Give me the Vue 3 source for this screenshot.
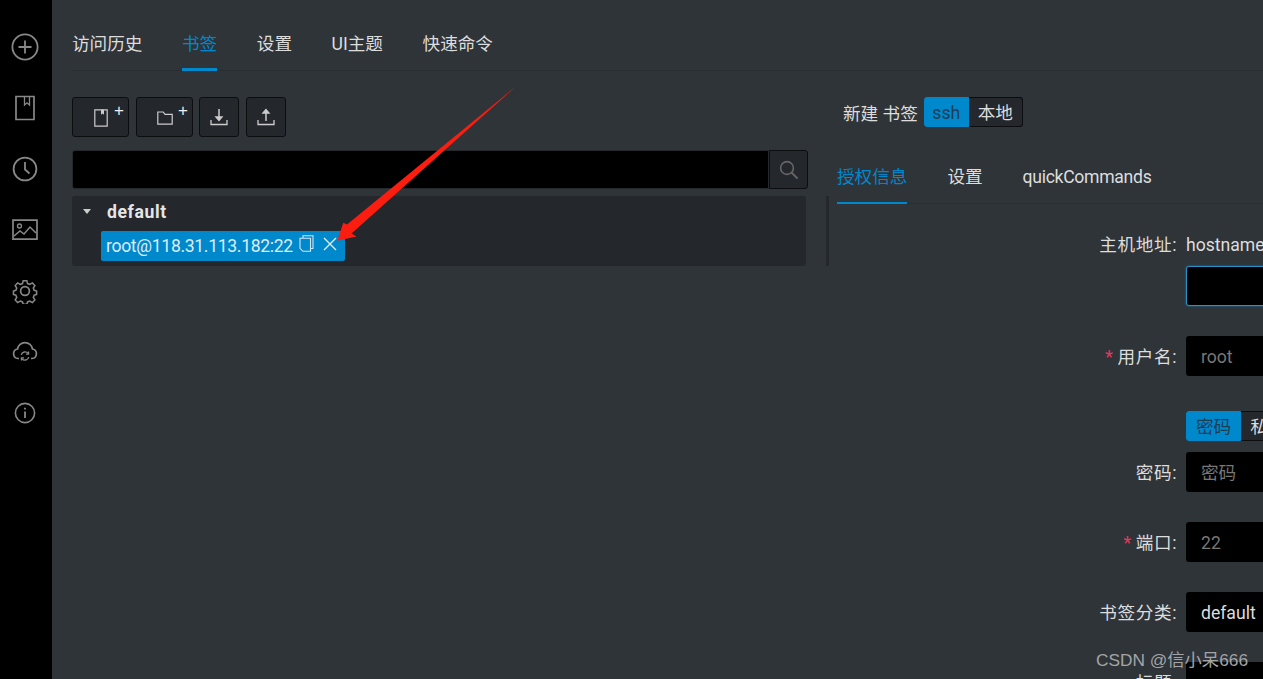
<script setup>
const mainTabs = [
  { label: '访问历史' },
  { label: '书签', active: true },
  { label: '设置' },
  { label: 'UI主题' },
  { label: '快速命令' }
]

const subTabs = [
  { label: '授权信息', active: true },
  { label: '设置' },
  { label: 'quickCommands' }
]
</script>

<template>
  <div class="page">
    <aside class="sidebar">
      <div class="side-item">
        <svg width="28" height="28" viewBox="0 0 28 28" fill="none" stroke="#888" stroke-width="1.8">
          <circle cx="14" cy="14" r="12.6" />
          <path d="M14 7.5v13M7.5 14h13" />
        </svg>
      </div>
      <div class="side-item">
        <svg width="22" height="26" viewBox="0 0 22 26" fill="none" stroke="#888" stroke-width="1.7">
          <path d="M2 1.5h18v23H2z" />
          <path d="M10.5 1.5v8.5l2.5-2.2 2.5 2.2V1.5" stroke-width="1.3" />
        </svg>
      </div>
      <div class="side-item">
        <svg width="26" height="26" viewBox="0 0 26 26" fill="none" stroke="#888" stroke-width="1.8">
          <circle cx="13" cy="13" r="11.4" />
          <path d="M13 6v7.5l4.5 4" />
        </svg>
      </div>
      <div class="side-item">
        <svg width="26" height="22" viewBox="0 0 26 22" fill="none" stroke="#888" stroke-width="1.7">
          <path d="M1 1.2h24v19H1z" />
          <circle cx="7.5" cy="7" r="2" stroke-width="1.3" />
          <path d="M2 17l6-5 4 3 6-7 6 6" stroke-width="1.5" />
        </svg>
      </div>
      <div class="side-item">
        <svg width="26" height="26" viewBox="0 0 26 26" fill="none" stroke="#888" stroke-width="1.7">
          <circle cx="13" cy="13" r="4.4" />
          <path d="M11 1.6h4l.8 3.2 2.4 1 2.9-1.7 2.7 2.9-1.7 2.8 1 2.4 2.6.8v3.8l-2.6.8-1 2.4 1.7 2.8-2.7 2.9-2.9-1.7-2.4 1-.8 2.5h-4l-.8-2.5-2.4-1-2.9 1.7-2.7-2.9 1.7-2.8-1-2.4-2.6-.8v-3.8l2.6-.8 1-2.4-1.7-2.8 2.7-2.9 2.9 1.7 2.4-1z" transform="translate(1.2 1.2) scale(.91)" />
        </svg>
      </div>
      <div class="side-item">
        <svg width="26" height="22" viewBox="0 0 26 22" fill="none" stroke="#888" stroke-width="1.7">
          <path d="M7 17.5H6A4.8 4.8 0 0 1 5.5 8 7.6 7.6 0 0 1 20.5 8 4.8 4.8 0 0 1 20 17.5h-1" />
          <path d="M9.3 14a3.8 3.8 0 0 1 6.8-1.6M16.7 16a3.8 3.8 0 0 1-6.8 1.6" stroke-width="1.4" />
          <path d="M16.6 10.6v2.6h-2.6M9.4 19.4v-2.6H12" stroke-width="1.2" />
        </svg>
      </div>
      <div class="side-item">
        <svg width="22" height="22" viewBox="0 0 22 22" fill="none" stroke="#888" stroke-width="1.6">
          <circle cx="11" cy="11" r="9.6" />
          <path d="M11 9.5v6.5" stroke-width="1.8" />
          <path d="M11 5.8v1.8" stroke-width="1.8" />
        </svg>
      </div>
    </aside>

    <main class="main">
      <nav class="tabs main-tabs">
        <span v-for="tab in mainTabs" :key="tab.label" class="tab" :class="{ active: tab.active }">{{ tab.label }}</span>
      </nav>

      <div class="columns">
        <section class="left">
          <div class="toolbar">
            <button class="tool wide">
              <svg width="14" height="18" viewBox="0 0 14 18" fill="none" stroke="#ccc" stroke-width="1.2">
                <path d="M.8.8h12.4v16.4H.8z" />
                <path d="M7 .8v5l1.5-1.2L10 5.8V.8" fill="#ccc" stroke="none" />
              </svg>
              <span class="plus">+</span>
            </button>
            <button class="tool wide">
              <svg width="16" height="14" viewBox="0 0 16 14" fill="none" stroke="#ccc" stroke-width="1.2">
                <path d="M.8 1h5.4l1.8 2.4h7.2v9.8H.8z" />
              </svg>
              <span class="plus">+</span>
            </button>
            <button class="tool">
              <svg width="18" height="18" viewBox="0 0 18 18" fill="none" stroke="#ccc" stroke-width="1.3">
                <path d="M1 12v4.5h16V12" />
                <path d="M9 1v10" stroke-width="1.5" />
                <path d="M6 9l3 3.5L12 9z" fill="#ccc" />
              </svg>
            </button>
            <button class="tool">
              <svg width="18" height="18" viewBox="0 0 18 18" fill="none" stroke="#ccc" stroke-width="1.3">
                <path d="M1 12v4.5h16V12" />
                <path d="M9 13V4" stroke-width="1.5" />
                <path d="M6 5l3-3.5L12 5z" fill="#ccc" />
              </svg>
            </button>
          </div>

          <div class="search">
            <div class="search-input"></div>
            <button class="search-btn">
              <svg width="20" height="20" viewBox="0 0 20 20" fill="none" stroke="#666" stroke-width="1.6">
                <circle cx="8" cy="8" r="6.4" />
                <path d="M12.6 12.6l6 6" stroke-width="2" />
              </svg>
            </button>
          </div>

          <div class="tree">
            <div class="tree-group">
              <span class="caret"></span>
              <span class="group-name">default</span>
            </div>
            <div class="tree-leaf">
              <span class="leaf-title">root@118.31.113.182:22</span>
              <svg class="leaf-copy" width="15" height="17" viewBox="0 0 15 17" fill="none" stroke="#cfe6f4" stroke-width="1.1">
                <path d="M4 3V.7h10V13.5h-2.5" />
                <path d="M1 3.3h10.5v13H4L1 13.3z" />
              </svg>
              <svg class="leaf-close" width="14" height="14" viewBox="0 0 14 14" fill="none" stroke="#dcecf6" stroke-width="1.4">
                <path d="M1 1l12 12M13 1L1 13" />
              </svg>
            </div>
          </div>
        </section>

        <div class="splitter"></div>

        <section class="right">
          <div class="new-head">
            <span class="new-title">新建 书签</span>
            <div class="segment">
              <span class="seg on ssh">ssh</span>
              <span class="seg">本地</span>
            </div>
          </div>

          <nav class="tabs sub-tabs">
            <span v-for="tab in subTabs" :key="tab.label" class="tab" :class="{ active: tab.active }">{{ tab.label }}</span>
          </nav>

          <div class="form">
            <div class="row host">
              <label class="label">主机地址:</label>
              <div class="field">
                <div class="hint">hostname</div>
                <div class="input focused"></div>
              </div>
            </div>
            <div class="row user">
              <label class="label"><i class="req">*</i>用户名:</label>
              <div class="field"><div class="input ph">root</div></div>
            </div>
            <div class="row auth">
              <div class="label"></div>
              <div class="field">
                <div class="segment">
                  <span class="seg on">密码</span>
                  <span class="seg">私钥</span>
                </div>
              </div>
            </div>
            <div class="row pass">
              <label class="label">密码:</label>
              <div class="field"><div class="input ph">密码</div></div>
            </div>
            <div class="row">
              <label class="label"><i class="req">*</i>端口:</label>
              <div class="field"><div class="input ph">22</div></div>
            </div>
            <div class="row">
              <label class="label">书签分类:</label>
              <div class="field"><div class="input val">default</div></div>
            </div>
            <div class="row">
              <label class="label">标题:</label>
              <div class="field"><div class="input"></div></div>
            </div>
          </div>
        </section>
      </div>
    </main>

    <svg class="arrow" width="1263" height="679" viewBox="0 0 1263 679">
      <polygon points="516.7,85.7 347,224.5 343.3,222.7 337.3,240.7 356.5,236.5 351.5,233.5" fill="#fb1d10" />
    </svg>
    <span class="watermark">CSDN @信小呆666</span>
  </div>
</template>

<style>
html, body {
  margin: 0;
  background: #2f3439;
}
</style>

<style scoped>
.page {
  position: relative;
  display: flex;
  width: 1263px;
  height: 679px;
  overflow: hidden;
  background: #2f3439;
  color: #ddd;
  font-family: Roboto, "Noto Sans CJK SC", sans-serif;
  font-size: 17.6px;
}

.sidebar {
  flex: 0 0 52px;
  box-sizing: border-box;
  background: #000;
  padding: 16px 2px 0 0;
}

.side-item {
  height: 61px;
  display: flex;
  justify-content: center;
  align-items: center;
}

.main {
  flex: 1;
  min-width: 0;
  padding-left: 20px;
}

.tabs {
  display: flex;
  border-bottom: 1px solid #2a2e32;
  white-space: nowrap;
}

.main-tabs {
  gap: 39.6px;
  height: 70px;
  margin-bottom: 26px;
}

.tab {
  height: calc(100% + 1px);
  box-sizing: border-box;
  line-height: 28px;
  padding-top: 30px;
}

.tab.active {
  color: #08c;
  border-bottom: 3px solid #08c;
}

.columns {
  display: flex;
}

.left {
  flex: 0 0 736px;
}

.toolbar {
  display: flex;
  gap: 7px;
  height: 40px;
  margin-bottom: 13px;
}

.tool {
  position: relative;
  width: 40px;
  height: 40px;
  padding: 0;
  box-sizing: border-box;
  display: flex;
  align-items: center;
  justify-content: center;
  background: #24272c;
  border: 1px solid #0c0d0e;
  border-radius: 3px;
}

.tool.wide {
  width: 57px;
}

.tool.wide + .tool:not(.wide) {
  margin-left: -1px;
}

.tool.wide svg {
  margin-top: 2px;
}

.plus {
  position: absolute;
  top: 3px;
  right: 4px;
  font-size: 17px;
  line-height: 20px;
  color: #eee;
}

.search {
  display: flex;
  height: 39px;
  margin-bottom: 7px;
}

.search-input {
  flex: 1;
  background: #000;
  border: 1px solid #25282c;
  border-radius: 3px 0 0 3px;
}

.search-btn {
  width: 39px;
  padding: 0;
  display: flex;
  align-items: center;
  justify-content: center;
  background: #24272c;
  border: 1px solid #0c0d0e;
  border-radius: 0 3px 3px 0;
}

.tree {
  width: 734px;
  height: 70px;
  box-sizing: border-box;
  background: #24272c;
  border-radius: 3px;
}

.tree-group {
  display: flex;
  align-items: center;
  height: 35px;
  box-sizing: border-box;
  padding: 0 0 4px 11px;
}

.caret {
  width: 0;
  height: 0;
  border-left: 4.5px solid transparent;
  border-right: 4.5px solid transparent;
  border-top: 5px solid #ccc;
  margin-right: 16px;
}

.group-name {
  font-weight: 700;
  letter-spacing: .6px;
  color: #e6e6e6;
}

.tree-leaf {
  display: flex;
  align-items: center;
  width: 244px;
  height: 30px;
  box-sizing: border-box;
  margin-left: 29px;
  padding-left: 5px;
  background: #08c;
  border-radius: 2px;
  color: #dcecf6;
}

.leaf-title {
  letter-spacing: -.33px;
  white-space: nowrap;
}

.leaf-copy {
  margin-left: 6px;
  margin-top: -5px;
}

.leaf-close {
  margin-left: 9px;
  margin-top: -5px;
}

.splitter {
  flex: 0 0 3px;
  height: 70px;
  margin: 99px 8px 0 18px;
  background: #24272c;
}

.right {
  flex: 1;
  min-width: 0;
}

.new-head {
  display: flex;
  align-items: center;
  height: 30px;
  padding-left: 6px;
  gap: 6px;
}

.segment {
  display: flex;
  height: 30px;
  box-sizing: border-box;
  white-space: nowrap;
}

.seg {
  padding: 0 9px;
  line-height: 30px;
  background: #24272c;
  border: 1px solid #0c0d0e;
  border-left: 0;
  border-radius: 0 3px 3px 0;
}

.seg.on {
  background: #08c;
  color: #1d3d55;
  border: 1px solid #08c;
  border-radius: 3px 0 0 3px;
}

.seg.ssh {
  width: 45px;
  box-sizing: border-box;
  padding: 0;
  text-align: center;
}

.sub-tabs {
  gap: 40px;
  height: 76px;
  margin-bottom: 26px;
}

.sub-tabs .tab {
  padding-top: 36px;
}

.sub-tabs .tab.active {
  border-bottom-width: 2px;
}

.sub-tabs .tab:last-child {
  letter-spacing: -.3px;
}

.form {
  display: flex;
  flex-direction: column;
}

.row {
  display: flex;
  margin-bottom: 30px;
}

.row.user {
  margin-bottom: 35px;
}

.row.auth {
  margin-bottom: 11px;
}

.label {
  flex: 0 0 340px;
  height: 40px;
  text-align: right;
  line-height: 42px;
  letter-spacing: .6px;
  margin-right: 9px;
  white-space: nowrap;
}

.auth .label {
  height: 0;
}

.host .label {
  line-height: 30px;
}

.req {
  color: #e8385e;
  font-style: normal;
  margin-right: 4px;
}

.field {
  width: 300px;
  flex: none;
}

.hint {
  line-height: 30px;
  margin-bottom: 6px;
}

.input {
  height: 40px;
  box-sizing: border-box;
  padding-left: 15px;
  line-height: 42px;
  background: #000;
  border-radius: 3px;
  white-space: nowrap;
}

.input.focused {
  border: 1px solid #2a90c8;
  box-shadow: 0 0 2px #08c;
}

.input.ph {
  color: #777;
}

.input.val {
  color: #ddd;
}

.arrow {
  position: absolute;
  left: 0;
  top: 0;
  pointer-events: none;
}

.watermark {
  position: absolute;
  left: 1096px;
  top: 649px;
  color: #a3a5a7;
  font-family: "Liberation Sans", "Noto Sans CJK SC", sans-serif;
  font-size: 17.3px;
  line-height: 22px;
  white-space: nowrap;
}
</style>
